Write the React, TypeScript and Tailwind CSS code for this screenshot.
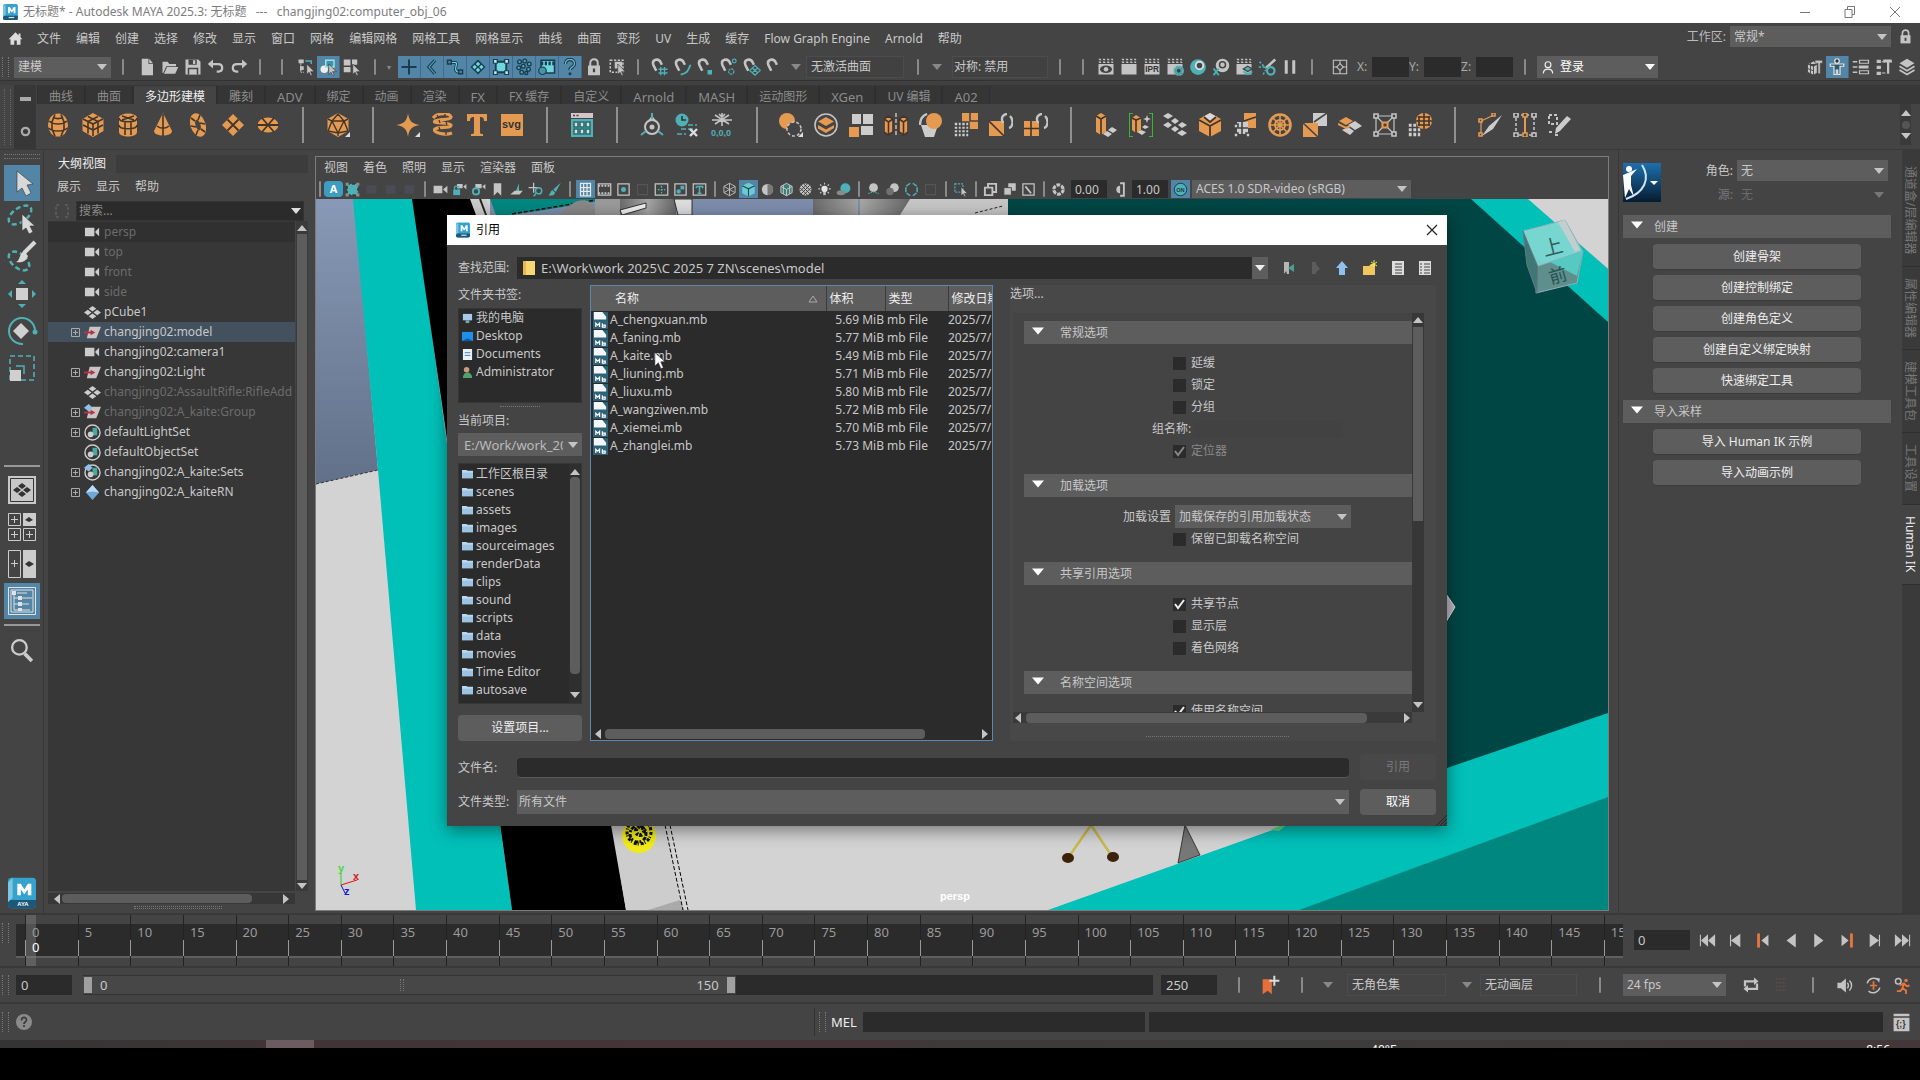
import React, { ReactNode } from "react";

const G = "#c4c4c4";
const O = "#e59a52";
const T = "#4fb0b6";

function Svg({ size = "size-5", children, box = "0 0 24 24" }: { size?: string; children: ReactNode; box?: string }) {
  return (
    <svg viewBox={box} className={`${size} shrink-0`} fill="none" strokeWidth="1.6" aria-hidden="true">
      {children}
    </svg>
  );
}

const cursor = <path d="M13 8v14l3-3 2.4 4.6 2-1-2.3-4.4h5z" fill={G} stroke="#333" strokeWidth=".8" />;
const magnet = <path d="M13 6C10-.5 1 2 3 9l4 8M13 6l1.500 3" stroke={G} strokeWidth="3.400" />;
const clap = <path d="M2 1h3l1 2H3zM7.500 1h3l1 2h-3zM13 1h3l1 2h-3zM18.500 1H21l1 2h-2.500zM2 4.500h3l1 2H3zM7.500 4.500h3l1 2h-3zM13 4.500h3l1 2h-3zM18.500 4.500H21l1 2h-2.500zM2 8h20v14H2z" fill={G} />;

/* 24-unit drawings shared by the tool bars */
const art: Record<string, ReactNode> = {
  home: <path d="M1 13 12 2l5 5V4h3v6l3 3h-3v9h-6v-7h-4v7H4v-9z" fill="#dcdcdc" />,
  file: <><path d="M5 1h9v7h6v15H5z" fill={G} /><path d="M15 1l5 6h-5z" fill={G} /></>,
  open: <><path d="M2 5h7l2 3h9v3H7L3 20H2z" fill={G} /><path d="M8 12h15l-4 9H4z" fill={G} /></>,
  save: <><path d="M2 2h17l3 3v17H2z" fill={G} /><path d="M6 2h11v7H6zM5 13h14v9H5z" fill="#444" /><path d="M12 3h3v5h-3zM7 15h10v7H7z" fill={G} /></>,
  undo: <><path d="M6 8h9c7 0 7 10 0 10h-2" stroke={G} strokeWidth="3" /><path d="M1 8l7-6v12z" fill={G} /></>,
  redo: <><path d="M18 8H9c-7 0-7 10 0 10h2" stroke={G} strokeWidth="3" /><path d="M23 8l-7-6v12z" fill={G} /></>,
  selH: <><path d="M2 2h7v5H2zM4 11h5v5H4z" fill={G} /><path d="M11 4h8v4" stroke={T} strokeWidth="2" /><path d="M5 7v12h4" stroke={G} strokeDasharray="2 1" />{cursor}</>,
  selO: <><circle cx="7" cy="15" r="5" fill="#eee" /><path d="M9 3h11v9H9z" stroke="#9fe0e6" fill="#3d93a8" strokeWidth="2" />{cursor}</>,
  selC: <><path d="M1 2h9v8H1zM12 2h7v7h-7zM1 12h9v7H1z" fill={G} />{cursor}</>,
  plus: <path d="M12 2v20M2 12h20" stroke="#183d50" strokeWidth="2.600" />,
  angle: <><path d="M16 3 8 12l8 9" stroke="#183d50" strokeWidth="4.500" /><path d="M16 3 8 12l8 9" stroke="#5aa9b8" strokeWidth="1.500" /></>,
  curve: <><path d="M2 3h5v5H2zM17 16h5v5h-5z" stroke="#183d50" strokeWidth="2" /><path d="M8 6h5c4 2-5 10 3 13" stroke="#183d50" strokeWidth="4" /><path d="M8 6h5c4 2-5 10 3 13" stroke="#6fd6db" strokeWidth="1.600" /></>,
  diamond: <><path d="m12 2 10 10-10 10L2 12z" fill="#183d50" /><path d="m12 5 3 3-3 3-3-3zM7.500 9l3 3-3 3-3-3zM16.500 9l3 3-3 3-3-3zM12 13l3 3-3 3-3-3z" fill="#6fd6db" /></>,
  lattice: <><path d="M5 5h14v14H5z" fill="#6fd6db" stroke="#183d50" strokeWidth="2.500" /><path d="M2 2h5v5H2zM17 2h5v5h-5zM2 17h5v5H2zM17 17h5v5h-5z" fill="#bfe9ee" stroke="#183d50" /></>,
  dots: <g stroke="#183d50" fill="#5f9fb0" strokeWidth="1.800"><circle cx="6" cy="5" r="2.500" /><circle cx="13" cy="4" r="2.500" /><circle cx="19" cy="8" r="2.500" /><circle cx="11" cy="11" r="2.500" /><circle cx="5" cy="13" r="2.500" /><circle cx="18" cy="15" r="2.500" /><circle cx="9" cy="19" r="2.500" /><circle cx="15" cy="20" r="2" /></g>,
  film: <><path d="M4 3h18v17H4z" fill="#6fd6db" stroke="#183d50" strokeWidth="2" /><path d="M4 7h18" stroke="#183d50" strokeWidth="5" strokeDasharray="3 2" /><circle cx="6" cy="17" r="5" fill="#4a93ab" stroke="#183d50" /></>,
  help: <><path d="M6 8c0-8 12-8 12 0 0 4-6 4-6 8" stroke="#183d50" strokeWidth="4.500" /><path d="M6 8c0-8 12-8 12 0 0 4-6 4-6 8" stroke="#7fc3d0" strokeWidth="1.500" /><circle cx="12" cy="21" r="2" fill="#183d50" /></>,
  lock: <><path d="M4 10h16v13H4z" fill={G} /><path d="M7 11V7c0-7 10-7 10 0v4" stroke={G} strokeWidth="2.600" /><path d="M12 14v5" stroke="#444" strokeWidth="3" /></>,
  selBox: <><path d="M3 3h17v16H3z" stroke={G} strokeDasharray="3 2" strokeWidth="2" /><path d="M9 5h10v9H9z" fill={G} />{cursor}</>,
  magGrid: <>{magnet}<path d="M13 12v11M18 12v11M10 15h12M10 20h12" stroke={T} strokeWidth="1.800" /></>,
  magCurve: <>{magnet}<path d="M9 22c8-1 10-5 13-13" stroke={T} strokeWidth="2.600" /></>,
  magPoint: <>{magnet}<path d="M14 16h6v6h-6z" fill={T} /></>,
  magProj: <>{magnet}<circle cx="15" cy="18" r="3.500" stroke={T} strokeDasharray="3 1" /><circle cx="19" cy="4" r="2.500" stroke={T} /></>,
  magPlane: <>{magnet}<path d="m16 10 7 6.500-7 6.500-7-6.500zM12 13l8 7M20 13l-8 7" stroke={T} /></>,
  mag: magnet,
  clapEye: <>{clap}<ellipse cx="12" cy="15" rx="8" ry="5" fill="#444" /><circle cx="12" cy="15" r="3" fill={G} /></>,
  clap: clap,
  clapIpr: <>{clap}<text x="3" y="19" fontSize="11" fontWeight="700" fontFamily="Liberation Sans, sans-serif" fill="#333">IPR</text></>,
  clapGear: <>{clap}<circle cx="17" cy="17" r="5.500" fill="#444" stroke={T} strokeWidth="3" strokeDasharray="3.500 .8" /><circle cx="17" cy="17" r="3.500" stroke={T} /></>,
  ball: <><circle cx="12" cy="12" r="10.500" fill={T} /><circle cx="14" cy="10" r="5" stroke="#ddd" strokeWidth="2.500" fill="#444" /></>,
  ballX: <><circle cx="14" cy="10" r="9" fill={G} /><circle cx="14" cy="9" r="4" stroke="#444" strokeWidth="2" /><path d="m2 14 7 9M9 14l-7 9" stroke={T} strokeWidth="2.600" /></>,
  clapLayer: <>{clap}<path d="m17 11 6 3.500-6 3.500-6-3.500z" fill={T} stroke="#444" /><path d="m11 18 6 3.500 6-3.500" stroke={T} strokeWidth="2.400" /></>,
  paint: <><path d="M23 2 11 13" stroke={G} strokeWidth="3.500" /><circle cx="17" cy="17" r="5" stroke={T} strokeWidth="3" /><path d="m2 5 9 9M1 12h9M7 22l3-6" stroke={T} strokeWidth="2" strokeDasharray="3 2" /></>,
  pause: <path d="M5 3h4v18H5zM15 3h4v18h-4z" fill={G} />,
  cross: <><path d="M2 2h20v20H2zM12 2v20M2 12h20" stroke={G} /><path d="m12 7 5 5-5 5-5-5z" fill="#444" stroke={G} /></>,
  modelKit: <><path d="m2 8 8-4 5 2v14l-5 3-8-4zM10 10v13M2 8l8 3 5-3M2 14l8 3M6 6v15" fill={G} stroke="#444" strokeWidth="1.2" /><path d="M12 3h10v4h-3v14h-3V7h-4z" fill={G} stroke="#444" strokeWidth=".8" /></>,
  man: <><circle cx="12" cy="4" r="3" stroke="#e8e8e8" fill="#333" /><path d="M3 8h18v3h-5v11h-3v-6h-2v6H8V11H3z" fill="#2d5972" stroke="#e8e8e8" /></>,
  attr: <><path d="M10 3h12v4H10zM10 17h12v4H10z" stroke={G} /><path d="M1 5h6M1 12h6M1 19h6" stroke={G} strokeWidth="1.800" /><path d="M9 10h13v4H9z" fill={G} /></>,
  toolSet: <><path d="M3 3h4v3H3zM3 11h4v3H3zM3 19h4v3H3zM9 5h4M9 20h5" fill={G} stroke={G} /><path d="M11 2h11l1 4h-4v15h-3V6h-5z" fill={G} /></>,
  layers: <><path d="m12 1 10 6-10 6L2 7z" fill={G} /><path d="m2 11 10 6 10-6M2 16l10 6 10-6" stroke={G} strokeWidth="2.400" /></>,
  user: <><circle cx="12" cy="8" r="5" stroke="#eee" strokeWidth="2" /><path d="M4 23c0-10 16-10 16 0" stroke="#eee" strokeWidth="2" /></>,
  /* shelf */
  sphere: <><ellipse cx="12" cy="12" rx="10" ry="11.500" fill={O} /><path d="M9 1.500 6 9v7l3 7M15 1.500 18 9v7l-3 7M3 8c5 4 13 4 18 0M2.500 15c5 4 14 4 19 0M7 4c3 2 7 2 10 0" stroke="#43352a" /></>,
  cube: <><path d="m12 0 10.500 6v12L12 24 1.500 18V6z" fill={O} /><path d="m2 6 10 5 10-5M12 11v12M2 12l10 5 10-5M7 3.500l10 5v12M17 3.500l-10 5v12" stroke="#43352a" /></>,
  cylinder: <><path d="M3 5c0-6 18-6 18 0v14c0 6-18 6-18 0z" fill={O} /><path d="M3 5c0 5 18 5 18 0M3 12c0 5 18 5 18 0M9 9v13M15 9v13M6 3l12 4M18 3 6 7" stroke="#43352a" /></>,
  cone: <><path d="m12 0 9 18c0 6-18 6-18 0z" fill={O} /><path d="M12 1v22M6 13c3 3 9 3 12 0" stroke="#43352a" /></>,
  torus: <><ellipse cx="12" cy="12" rx="7.500" ry="12" fill={O} transform="rotate(-18 12 12)" /><ellipse cx="12" cy="12" rx="2.500" ry="5.500" fill="#444" transform="rotate(-18 12 12)" /><path d="M5 5l4 3M19 19l-4-3M5 13l5 1M19 11l-5-1M14 2l-2 5M10 22l2-5" stroke="#43352a" /></>,
  plane: <><path d="m12 1 11 11-11 11L1 12z" fill={O} /><path d="M6.500 6.500l11 11M17.500 6.500l-11 11" stroke="#43352a" strokeWidth="1.800" /></>,
  disc: <><ellipse cx="12" cy="12" rx="10.500" ry="7.500" fill={O} /><path d="M1 12h22M6 5l12 14M18 5 6 19" stroke="#43352a" strokeWidth="1.800" /></>,
  ico: <><path d="m12 0 10.500 6v12L12 24 1.500 18V6z" fill={O} /><path d="M12 1 6 8h12zM6 8l6 12 6-12M2 6l4 2-4 10 10 2 10-2-4-10 4-2M12 20v3" stroke="#43352a" strokeWidth="1.400" /><path d="m24 19-5 5h5z" fill="#ddd" /></>,
  spark: <><path d="M12 0c1 8 4 11 12 12-8 1-11 4-12 12-1-8-4-11-12-12 8-1 11-4 12-12z" fill={O} /><path d="m24 19-5 5h5z" fill="#ddd" /></>,
  helix: <><path d="M3 5C8-1 20 0 21 4c0 3-12 2-16 4-4 3 15 1 16 4 0 4-12 1-16 4-3 3 9 7 17 4" stroke={O} strokeWidth="3.200" /><path d="m7 2 2 3M15 1v3M9 7l1 3M16 9l1 3M9 14l1 3M16 19v3" stroke="#43352a" strokeWidth="1.200" /></>,
  text: <path d="M2 1h20v7h-3c0-3-1-4-4-4v15c0 2 1 2 3 2v2H6v-2c2 0 3 0 3-2V4C6 4 5 5 5 8H2z" fill={O} />,
  svg: <><path d="M1 1h22v22H1z" fill={O} /><text x="2" y="15" fontSize="11" fontWeight="700" fontFamily="Liberation Sans, sans-serif" fill="#333">svg</text></>,
  gridWin: <><path d="M1 0h22v5H1z" fill="#d5c4c8" /><path d="M1 6h22v18H1z" fill={T} /><path d="M4 9h4v5H4zM10 9h4v5h-4zM16 9h4v5h-4zM4 16h4v5H4zM10 16h4v5h-4zM16 16h4v5h-4z" fill="#ddd" stroke="#2d6b70" /><path d="M3 2.500h2M6.500 2.500h2" stroke="#444" /></>,
  pivot: <><circle cx="12" cy="14" r="7" stroke={G} strokeWidth="2" /><circle cx="12" cy="14" r="2.500" fill={G} /><path d="M12 4 9 8M12 4l3 4" stroke={G} strokeWidth="2" /><path d="M12 0v6M6 18l-5 4M18 18l5 4" stroke={T} strokeWidth="2" /></>,
  clock: <><circle cx="7" cy="7" r="6.500" fill={T} /><path d="M7 3v4h4" stroke="#333" /><path d="M13 12h9M6 16h12M2 21h9" stroke={T} strokeDasharray="5 2" /><path d="m15 16 7 7M22 16l-7 7" stroke="#ddd" strokeWidth="2.400" /></>,
  freeze: <><path d="M12 0v13M5 2l14 9M19 2 5 11M2 7h20M9 1l3 3 3-3" stroke={G} strokeWidth="1.600" /><text x="1" y="23" fontSize="9" fontWeight="700" fontFamily="Liberation Sans, sans-serif" fill={T}>0,0,0</text></>,
  bool: <><circle cx="8" cy="8" r="8" fill={O} /><circle cx="15" cy="16" r="7" fill="#444" stroke={G} strokeDasharray="3 2" /><path d="m24 19-5 5h5z" fill="#ddd" /></>,
  stack: <><circle cx="12" cy="12" r="11" stroke={G} strokeWidth="1.600" /><path d="m12 4 8 4.500-8 4.500-8-4.500z" fill={O} /><path d="m4 12 8 4.500 8-4.500v3L12 20l-8-4.500z" fill={O} /></>,
  combine: <><path d="M0 14h10v10H0z" fill={O} /><path d="M3 1h9v10H3zM14 1h10v10H14zM12 13h12v9H12z" fill="#ccc" /></>,
  mirror: <><path d="m0 6 4-3 5 3v13l-5 3-4-3zM15 6l5-3 4 3v13l-4 3-5-3z" fill={O} stroke="#43352a" /><path d="M4.500 9v13M19.500 9v13M0 6l4.500 3L9 6M15 6l4.500 3L24 6" stroke="#43352a" /><path d="M12 0v24" stroke="#ddd" strokeDasharray="4 2" strokeWidth="1.200" /></>,
  smooth: <><path d="m2 12 4 12h9l4-12z" fill="#ccc" /><circle cx="15" cy="8" r="8" fill={O} /><path d="M8 1C3 3 1 7 1 12" stroke={G} strokeWidth="2.400" /></>,
  gridOr: <><path d="M8 0h16v16H8z" fill={O} /><path d="M0 9h15v15H0z" fill="#ccc" stroke="#444" /><path d="M4 9v15M7.500 9v15M11.500 9v15M0 13h15M0 16.500h15M0 20h15M16 0v8M16 8h8" stroke="#444" /></>,
  swap: <><path d="M0 8h15v15H0z" fill={O} /><path d="m0 8 15 15" stroke="#43352a" /><path d="M14 10c-3-6 1-9 4-9M20 15c4-1 5-8 1-12" stroke={G} strokeWidth="2.400" /></>,
  swap2: <><path d="M0 8h15v15H0z" fill={O} /><path d="M7 8v15M0 15.500h15" stroke="#43352a" /><path d="M14 10c-3-6 1-9 4-9M20 15c4-1 5-8 1-12" stroke={G} strokeWidth="2.400" /></>,
  extrude: <><path d="m2 3 5-3 5 3v16l-5 3-5-3z" fill={O} /><path d="m2 3 5 3 5-3M7 6v16" stroke="#43352a" /><path d="m18 14 5 3-4 3-5-3zM13 18l5 3-4 3-5-3z" fill="#ccc" /></>,
  bridge: <><path d="M4 0H0v24h4M20 0h4v24h-4" stroke="#35d42b" strokeWidth="1.600" /><path d="m3 5 4-3 5 3v12l-5 3-4-3z" fill={O} /><path d="m3 5 4 2 5-2M7 7v13" stroke="#43352a" /><path d="M18 2l1 3 3 1-3 1-1 3-1-3-3-1 3-1zM16 12l4 2-4 2-3-2zM12 17l5 2-4 3-5-3z" fill="#ccc" /></>,
  tiles: <path d="m5 0 5 3-5 3-5-3zM12 5l4 3-4 3-4-3zM19 9l5 3-5 3-4-3zM5 9l4 3-4 3-5-3zM12 13l4 3-4 3-4-3zM19 17l5 3-5 3-5-3z" fill="#ccc" />,
  bevel: <><path d="m12 0 11 6v12l-11 6-11-6V6z" fill={O} /><path d="m5 4 7-4 7 4-7 4z" fill="#d8d8d8" /><path d="m1 7 11 6 11-6M12 13v11M6 4l6 5 6-5" stroke="#43352a" strokeWidth="1.800" /></>,
  detach: <><path d="M11 0h12v15H11z" fill={O} /><path d="M11 8 23 4" stroke="#43352a" /><path d="M4 9h11v12H4z" fill="#ccc" /><path d="M1 20h4v4H1zM13 20h4v4h-4zM1 11h4v4H1zM9 8v13M4 15h11" stroke="#444" fill="#ccc" /></>,
  wheel: <><circle cx="12" cy="12" r="10.500" stroke={O} strokeWidth="2.600" /><circle cx="12" cy="12" r="5" stroke={O} strokeWidth="2" /><path d="M12 2v20M2 12h20M5 5l14 14M19 5 5 19" stroke={O} strokeWidth="1.600" /></>,
  quads: <><path d="M10 0h14v13H10z" fill="#ccc" /><path d="M0 10h15v14H0z" fill={O} /><path d="m0 10 15 14M11 9l13-9" stroke="#444" /></>,
  flat: <><path d="m8 4 7 4-7 4-7-4z" fill={O} /><path d="m17 8 7 5-7 4-7-5zM10 14l6 4-4 4-8-5z" fill="#ccc" /><path d="m0 11 8 4 4-2" stroke={O} strokeWidth="2" /></>,
  uv: <><path d="M3 3h18v18H3zM3 3l18 18M21 3 3 21" stroke={G} strokeWidth="1.200" /><path d="M9.500 9.500h5v5h-5z" fill="#444" stroke={O} strokeWidth="2" /><path d="M1 1h4v4H1zM19 1h4v4h-4zM1 19h4v4H1zM19 19h4v4h-4z" fill="#444" stroke={G} /></>,
  globeGrid: <><path d="M0 10h13v14H0z" fill="#ccc" stroke="#444" /><path d="M4.500 10v14M9 10v14M0 14.500h13M0 19h13" stroke="#444" /><circle cx="16" cy="8" r="8" fill={O} /><path d="M16 0v16M8 8h16M11 3v10M21 3v10M10 4h12M10 12h12" stroke="#43352a" /></>,
  knife: <><path d="M3 8v14M3 8l13-6" stroke={O} strokeWidth="1.200" /><path d="M24 2 11 13 4 23l11-7z" fill="#ccc" /><path d="M1 6h3v3H1zM14 0h3v3h-3zM1 20h3v3H1z" fill="#444" stroke={O} /></>,
  loop: <><path d="M3 2h18v20H3z" stroke={G} strokeDasharray="3 2" /><path d="M12 2v20" stroke={O} strokeWidth="2" /><path d="M10 0h4v4h-4zM10 20h4v4h-4z" fill="#444" stroke={O} /><path d="M1 0h4v4H1zM19 0h4v4h-4zM1 20h4v4H1zM19 20h4v4h-4z" fill="#444" stroke={G} /></>,
  pencil: <><path d="M2 2h8v9H2zM2 19h4M8 22h4" stroke={G} strokeDasharray="3 2" strokeWidth="2" /><path d="M20 3l4 3L13 18l-5 3 1-6z" fill="#ccc" /></>,
  /* viewport bar */
  frame: <><path d="M3 3h18v18H3z" fill={T} stroke="#2f3f40" strokeWidth="3" strokeDasharray="5 3" /><path d="M1 1h5v5H1zM18 1h5v5h-5zM1 18h5v5H1zM18 18h5v5h-5z" fill="#8c8c8c" /></>,
  dim: <path d="M4 5h16v14H4z" fill="#4b4b53" />,
  cam: <path d="M1 6h14v12H1zM16 12l7-6v12z" fill={G} />,
  camLock: <><path d="M8 3h9v7H8zM18 7l5-4v9z" fill={G} /><path d="M2 12h11v9H2z" fill={T} /><path d="M4 12V9c0-3 7-3 7 0v3" stroke={T} strokeWidth="2" /></>,
  camGear: <><path d="M7 3h10v7H7zM18 7l5-4v9z" fill={G} /><circle cx="8" cy="15" r="5" stroke={T} strokeWidth="3" /></>,
  mark: <path d="M6 2h12v20l-6-6-6 6z" fill={G} />,
  plane2: <><path d="M10 17 16 2v13z" fill={T} /><path d="m2 20 7-6h13l-5 6z" fill={G} /></>,
  pan: <><path d="M9 1v16M1 9h16" stroke={G} strokeWidth="2" /><circle cx="17" cy="14" r="5" stroke={T} strokeWidth="2.400" /><path d="m13 18-4 5" stroke={T} strokeWidth="2.400" /></>,
  brush: <path d="M22 1 10 12l4 4zM9 13c-4 1-3 6-7 8 5 2 10 0 11-4z" fill={T} />,
  grid: <path d="M4 2h16v20H4zM9 2v20M14.500 2v20M4 9h16M4 15h16" stroke="#e8e8e8" strokeWidth="2" />,
  strip: <><path d="M2 3h20v18H2z" stroke={G} strokeWidth="2" /><path d="M2 6h20M2 18h20" stroke={G} strokeWidth="3" strokeDasharray="3 2" /></>,
  boxDot: <><path d="M3 3h18v18H3z" stroke={G} strokeWidth="2" /><circle cx="12" cy="12" r="4" fill={T} /></>,
  boxDim: <path d="M4 4h16v16H4z" stroke="#555" strokeWidth="2" />,
  boxDash: <><path d="M2 3h20v18H2z" stroke={G} strokeWidth="2" /><path d="M6 12h12M12 6v12" stroke={T} strokeDasharray="3 2" strokeWidth="2" /></>,
  boxShape: <><path d="M3 3h18v18H3z" stroke={G} strokeWidth="2" /><circle cx="9" cy="15" r="3.500" fill={T} /><path d="M12 6h6v6h-6z" fill={T} /></>,
  boxT: <><path d="M2 3h20v18H2z" stroke={G} strokeWidth="2" /><path d="M7 7h10v3M7 7v3M12 7v11M9 18h6" stroke={T} strokeWidth="2.400" /></>,
  wire: <path d="m12 2 9 5v10l-9 5-9-5V7zM3 7l9 5 9-5M12 12v10M12 2v10M3 17l9-5 9 5" stroke={G} strokeWidth="1.400" />,
  shaded: <><path d="m12 1 10 5v12l-10 5-10-5V6z" fill="#6ccbd2" /><path d="m2 6 10 5 10-5M12 11v12" stroke="#1d4a58" strokeWidth="1.800" /></>,
  half: <><circle cx="12" cy="12" r="9" fill={G} /><path d="M12 3a9 9 0 0 1 0 18z" fill="#777" /></>,
  texCube: <><path d="m12 2 9 5v10l-9 5-9-5V7z" fill="#3b7f78" stroke={G} /><path d="m3 7 9 5 9-5M12 12v10M7 5v14M17 5v14" stroke={G} /></>,
  checker: <><circle cx="12" cy="12" r="9.500" fill={G} /><path d="M5 5l14 14M9 3l12 12M3 9l12 12M19 5 5 19M15 3 3 15M21 9 9 21" stroke="#444" strokeWidth="1.600" /></>,
  bulb: <><circle cx="12" cy="11" r="5" fill="#e5e5e5" /><path d="M10 16h4v5h-4z" fill={G} /><path d="M12 1v3M2 11h3M19 11h3M5 4l2 2M19 4l-2 2M5 18l2-2M19 18l-2-2" stroke={G} strokeWidth="1.800" /></>,
  shadow: <><circle cx="15" cy="10" r="8" fill={T} /><ellipse cx="8" cy="17" rx="7" ry="4" fill="#8a8a8a" /></>,
  ao: <><circle cx="12" cy="9" r="7" fill={G} /><path d="M4 19c5-4 11-4 16 0" stroke={T} strokeDasharray="2 2" strokeWidth="2" /></>,
  blur: <><circle cx="15" cy="9" r="7" fill={G} /><circle cx="8" cy="15" r="6" fill="#707070" /></>,
  alias: <path d="M10 2 3 7v10l7 5M14 2l7 5v10l-7 5" stroke={T} strokeWidth="2.400" strokeDasharray="8 2" />,
  isolate: <><path d="M3 3h13v13H3z" stroke={T} strokeDasharray="3 2" strokeWidth="2" />{cursor}</>,
  xray: <><path d="M8 3h13v13H8z" stroke={G} strokeWidth="3" /><path d="M3 9h12v12H3z" fill="#444" stroke={G} strokeWidth="3" /></>,
  xray2: <><path d="M10 2h12v12H10z" fill={G} /><path d="M3 9h12v12H3z" fill={G} stroke="#444" strokeWidth="1.500" /></>,
  xray3: <><path d="M3 3h18v18H3z" stroke={G} strokeWidth="2" /><path d="m7 7 9 11" stroke={G} strokeWidth="3" /></>,
  aperture: <circle cx="12" cy="12" r="7.500" stroke={G} strokeWidth="5" strokeDasharray="6 1.800" />,
  gamma: <><path d="M13 2h6v20h-6" stroke={G} strokeWidth="3" /><path d="M13 6a6 6 0 0 0 0 12z" fill={G} /></>,
  onBadge: <><circle cx="12" cy="12" r="10" fill={T} stroke="#183d50" /><text x="5" y="16" fontSize="9" fontWeight="700" fontFamily="Liberation Sans, sans-serif" fill="#183d50">ON</text></>,
  /* playback */
  first: <path d="M2 4v16M12 5v14l-8-7zM22 5v14l-8-7z" fill={G} stroke={G} strokeWidth="1.500" />,
  prev: <path d="M5 4v16M18 4v16L7 12z" fill={G} stroke={G} />,
  prevKey: <><path d="M5 2v20" stroke="#e4763e" strokeWidth="4" /><path d="M19 4v16L9 12z" fill={G} /></>,
  back: <path d="M18 2v20L5 12z" fill={G} />,
  play: <path d="M6 2v20l13-10z" fill={G} />,
  nextKey: <><path d="M19 2v20" stroke="#e4763e" strokeWidth="4" /><path d="M5 4v16l10-8z" fill={G} /></>,
  next: <path d="M19 4v16M6 4v16l11-8z" fill={G} stroke={G} />,
  last: <path d="M22 4v16M12 5v14l8-7zM2 5v14l8-7z" fill={G} stroke={G} strokeWidth="1.500" />,
  keyMark: <><path d="M2 5h11v18l-5-4-6 4z" fill="#e4703c" /><path d="M16 1v12M10 7h12" stroke="#ddd" strokeWidth="2.400" /></>,
  repeat: <><path d="M4 14V7h14M20 10v7H6" stroke={G} strokeWidth="3" /><path d="m16 2 6 5-6 5zM8 12l-6 5 6 5z" fill={G} /></>,
  cache: <path d="M5 4h14M5 9h14M5 14h14M5 19h14" stroke="#5a4a44" strokeWidth="2" strokeDasharray="3 1" />,
  sound: <><path d="M2 8h5l7-6v20l-7-6H2z" fill={G} /><path d="M16 8c2 2 2 6 0 8M19 5c4 4 4 10 0 14" stroke={G} strokeWidth="2" /></>,
  autoKey: <><path d="M19 4A10 10 0 0 0 3 9M5 20a10 10 0 0 0 16-5" stroke={G} strokeWidth="2" /><path d="m15 1 6 1-1 6z" fill={G} /><path d="M12 6v12M7 12h10" stroke="#e4763e" strokeWidth="2.400" /></>,
  runner: <><circle cx="6" cy="6" r="4" stroke={G} strokeWidth="2" /><circle cx="17" cy="5" r="2.500" fill="#e4763e" /><path d="M8 12l6-3 4 4 4-1M14 9l-2 7 5 3v5M12 16l-3 4H4" stroke="#e4763e" strokeWidth="2.600" /></>,
  script: <><path d="M2 1h20v3H2zM2 6h20v17H2z" fill={G} /><text x="5" y="18" fontSize="11" fontWeight="700" fontFamily="Liberation Sans, sans-serif" fill="#333">{"{;}"}</text></>,
};

function Ico({ n, size }: { n: string; size?: string }) {
  return <Svg size={size}>{art[n]}</Svg>;
}

function Tri({ dir = "down", color = G, big }: { dir?: string; color?: string; big?: boolean }) {
  const d = dir === "down" ? "M0 2h10l-5 6z" : dir === "up" ? "M0 8h10L5 2z" : dir === "left" ? "M8 0v10L2 5z" : "M2 0v10l6-5z";
  return <svg viewBox="0 0 10 10" className={big ? "size-3 shrink-0" : "size-[10px] shrink-0"} aria-hidden="true"><path d={d} fill={color} /></svg>;
}

function Logo({ size, caption }: { size: string; caption?: boolean }) {
  return (
    <svg viewBox="0 0 24 26" className={`${size} shrink-0`} aria-hidden="true">
      <path d="M3 0h18q3 0 3 3v20q0 3-3 3H3q-3 0-3-3V3q0-3 3-3z" fill="#36a3cf" />
      <path d="M0 19h24v4q0 3-3 3H3q-3 0-3-3z" fill="#1d5878" />
      <path d="M0 4l4-4v17l-4 4z" fill="#7cc6df" />
      <path d="M8 15V5h3l3 5 3-5h3v10h-3v-5l-3 4-3-4v5z" fill="#fff" />
      {caption ? <text x="8" y="24" fontSize="5" fontWeight="700" fontFamily="Liberation Sans, sans-serif" fill="#fff">AYA</text> : <path d="M9 22h9" stroke="#cfe6ef" strokeWidth="2" />}
    </svg>
  );
}

function Sep({ w = "w-6" }: { w?: string }) {
  return <span className={`${w} flex shrink-0 justify-center`}><span className="h-4 w-[2px] rounded-full bg-[#8a8a8a]" /></span>;
}

function Tool({ n, on, label }: { n: string; on?: boolean; label?: string }) {
  return (
    <button aria-label={label ?? n} className={`flex h-[22px] w-[23px] shrink-0 items-center justify-center ${on ? "border-r border-[#3f6c88] bg-[#5285a6]" : ""}`}>
      <Ico n={n} size="size-[18px]" />
    </button>
  );
}

function Mini({ n, on }: { n: string; on?: boolean }) {
  return (
    <button aria-label={n} className={`flex h-[18px] w-[19px] shrink-0 items-center justify-center ${on ? "bg-[#5285a6]" : ""}`}>
      <Ico n={n} size="size-[15px]" />
    </button>
  );
}

function Pick({ value, label, className = "", arrow = G }: { value: string; label: string; className?: string; arrow?: string }) {
  return (
    <div className={`relative flex shrink-0 items-center bg-[#5d5d5d] ${className}`}>
      <select aria-label={label} className="h-full w-full appearance-none truncate bg-transparent pr-5 pl-1 outline-none">
        <option>{value}</option>
      </select>
      <span className="pointer-events-none absolute right-1"><Tri color={arrow} /></span>
    </div>
  );
}

function Grip() {
  return <span className="h-5 w-[7px] shrink-0 border-x border-dotted border-[#777]" />;
}

const menus = ["文件", "编辑", "创建", "选择", "修改", "显示", "窗口", "网格", "编辑网格", "网格工具", "网格显示", "曲线", "曲面", "变形", "UV", "生成", "缓存", "Flow Graph Engine", "Arnold", "帮助"];
const shelfTabs = ["曲线", "曲面", "多边形建模", "雕刻", "ADV", "绑定", "动画", "渲染", "FX", "FX 缓存", "自定义", "Arnold", "MASH", "运动图形", "XGen", "UV 编辑", "A02"];
const shelf = "sphere cube cylinder cone torus plane disc | ico | spark helix text svg | gridWin | pivot clock freeze | bool stack combine mirror smooth gridOr swap swap2 | extrude bridge tiles bevel detach wheel quads flat uv globeGrid | knife loop pencil".split(" ");

function Header() {
  return (
    <header className="shrink-0">
      <div className="flex h-[23px] items-center bg-white text-[#7d7d7d]">
        <span className="ml-[3px]"><Logo size="h-4 w-[15px]" /></span>
        <h1 className="ml-[5px] whitespace-pre">无标题* - Autodesk MAYA 2025.3: 无标题   ---   changjing02:computer_obj_06</h1>
        <div className="ml-auto flex">
          <button aria-label="最小化" className="flex w-[45px] justify-center"><svg viewBox="0 0 12 12" className="size-3"><path d="M1 6.500h10" stroke="#777" /></svg></button>
          <button aria-label="还原" className="flex w-[45px] justify-center"><svg viewBox="0 0 12 12" className="size-3"><path d="M1 3.500h7v8H1zM3.500 3V.5h7v8H8" fill="none" stroke="#777" /></svg></button>
          <button aria-label="关闭" className="mr-[3px] flex w-[45px] justify-center"><svg viewBox="0 0 12 12" className="size-3"><path d="m1 1 10 10M11 1 1 11" stroke="#777" /></svg></button>
        </div>
      </div>

      <div className="flex h-[31px] items-center">
        <button aria-label="主页" className="ml-[8px] mr-[14px]"><Ico n="home" size="size-[15px]" /></button>
        <nav className="flex gap-[15px]">
          {menus.map((m) => <button key={m} className="whitespace-nowrap">{m}</button>)}
        </nav>
        <span className="mr-1 mb-1 ml-auto text-[#bbb]">工作区:</span>
        <Pick value="常规*" label="工作区" className="mb-1 h-[21px] w-[161px]" />
        <span className="mx-[7px] mb-1"><Ico n="lock" size="size-[15px]" /></span>
      </div>

      <div className="flex h-[26px] items-center">
        <span className="mr-[5px] ml-[2px] flex"><Grip /></span>
        <Pick value="建模" label="菜单集" className="h-[21px] w-[97px]" />
        <Sep />
        <Tool n="file" /><Tool n="open" /><Tool n="save" /><Tool n="undo" /><Tool n="redo" />
        <Sep w="w-5" /><Sep />
        <Tool n="selH" /><Tool n="selO" on /><Tool n="selC" />
        <Sep />
        <span className="w-[11px] text-[8px] text-[#888]">▾</span>
        <Tool n="plus" on /><Tool n="angle" on /><Tool n="curve" on /><Tool n="diamond" on /><Tool n="lattice" on /><Tool n="dots" on /><Tool n="film" on /><Tool n="help" on />
        <Tool n="lock" /><Tool n="selBox" />
        <Sep w="w-5" />
        <Tool n="magGrid" /><Tool n="magCurve" /><Tool n="magPoint" /><Tool n="magProj" /><Tool n="magPlane" /><Tool n="mag" />
        <span className="flex w-5 justify-center"><Tri color="#888" /></span>
        <span className="flex h-[22px] w-[98px] shrink-0 items-center border border-[#4c4c4c] bg-[#414141] pl-1">无激活曲面</span>
        <Sep w="w-7" />
        <span className="flex w-5"><Tri color="#888" /></span>
        <span className="flex h-[22px] w-24 shrink-0 items-center border border-[#4c4c4c] bg-[#414141] pl-px">对称: 禁用</span>
        <Sep /><Sep w="w-[22px]" />
        <Tool n="clapEye" /><Tool n="clap" /><Tool n="clapIpr" /><Tool n="clapGear" /><Tool n="ball" /><Tool n="ballX" /><Tool n="clapLayer" /><Tool n="paint" /><Tool n="pause" />
        <Sep w="w-[22px]" />
        <span className="flex w-[34px] justify-center"><Ico n="cross" size="size-4" /></span>
        {["X", "Y", "Z"].map((a) => (
          <label key={a} className="flex items-center"><span className="w-[15px] text-[#aaa]">{a}:</span><input className="h-5 w-[37px] bg-[#2b2b2b]" /></label>
        ))}
        <Sep />
        <div className="relative flex h-[22px] w-[121px] shrink-0 items-center bg-[#5d5d5d] text-white">
          <span className="pointer-events-none absolute left-1"><Ico n="user" size="size-[14px]" /></span>
          <select aria-label="登录" className="h-full w-full appearance-none pl-[23px] outline-none"><option>登录</option></select>
          <span className="pointer-events-none absolute right-[3px]"><Tri color="#fff" /></span>
        </div>
        <div className="ml-auto mr-[2px] flex">
          <Tool n="modelKit" /><Tool n="man" on /><Tool n="attr" /><Tool n="toolSet" /><Tool n="layers" />
        </div>
      </div>

      <div className="h-[5px] border-t border-[#333] bg-[#404040]" />

      <div className="flex h-[64px]">
        <div className="flex w-[14px] shrink-0 justify-center py-1"><span className="w-[7px] border-x border-dotted border-[#666]" /></div>
        <div className="mr-px flex w-[22px] shrink-0 flex-col items-center justify-between bg-[#373737] pt-3 pb-3">
          <span className="h-1 w-[11px] bg-[#aaa]" />
          <svg viewBox="0 0 12 12" className="size-[11px]"><circle cx="6" cy="6" r="4" fill="none" stroke="#aaa" strokeWidth="2.500" /></svg>
        </div>
        <div className="min-w-0 flex-1">
          <div className="flex h-[19px] bg-[#373737] pt-px text-[#8c8c8c]">
            {shelfTabs.map((t) => (
              <button key={t} className={`flex items-center border-x border-[#2f2f2f] px-[11px] pt-[3px] whitespace-nowrap ${t === "多边形建模" ? "bg-[#444] text-[#eee]" : "bg-[#353535]"} ${/^\w+$/.test(t) ? "text-[13px]" : ""}`}>{t}</button>
            ))}
          </div>
          <div className="flex h-[45px] pb-1">
            <div className="ml-1 flex w-[80vw] items-center">
              {shelf.map((n, i) => (
                <span key={i} className="flex flex-1 justify-center">
                  {n === "|" ? <span className="h-9 w-[2px] bg-[#909090]" /> : <button aria-label={n}><Ico n={n} size="size-6" /></button>}
                </span>
              ))}
            </div>
            <div className="mr-[9px] ml-auto flex w-[11px] flex-col items-center justify-between bg-[#3a3a3a] py-1">
              <Tri dir="up" /><span className="size-[8px] rounded-full bg-[#555]" /><Tri />
            </div>
          </div>
        </div>
      </div>
    </header>
  );
}

function ToolBox() {
  const cell = "flex h-9 w-9 items-center justify-center";
  return (
    <aside className="flex w-[43px] shrink-0 flex-col items-center pb-[4px]">
      <span className="mt-1 h-[5px] w-9 shrink-0 border-y border-dotted border-[#777]" />
      <div className="mt-[6px] flex flex-col gap-px">
        <button aria-label="选择" className={`${cell} bg-[#5285a6]`}><svg viewBox="0 0 36 36" className="size-9"><path d="M13 6v21l5-4 4 8 5-3-4-8 6-1z" fill="#d8d8d8" stroke="#333" strokeWidth=".6" /></svg></button>
        <button aria-label="套索" className={cell}><svg viewBox="0 0 36 36" className="size-9"><ellipse cx="16" cy="13" rx="13" ry="7" transform="rotate(-35 16 13)" fill="none" stroke={T} strokeWidth="2.500" strokeDasharray="5 3" /><path d="M18 12v17l4-3 3 6 4-2-3-6h5z" fill="#d8d8d8" stroke="#333" strokeWidth=".6" /></svg></button>
        <button aria-label="绘制选择" className={cell}><svg viewBox="0 0 36 36" className="size-9"><ellipse cx="15" cy="22" rx="7" ry="12" transform="rotate(-50 15 22)" fill="none" stroke={T} strokeWidth="2.500" strokeDasharray="5 3" /><path d="M31 3 20 14" stroke="#d8d8d8" strokeWidth="4" /><path d="M20 12l4 5c-2 6-7 7-12 6 4-1 3-8 8-11z" fill="#d8d8d8" /></svg></button>
        <button aria-label="移动" className={cell}><svg viewBox="0 0 36 36" className="size-9"><path d="M12 12h12v12H12z" fill="#d0d0d0" /><path d="m18 4 4 4h-8zM18 32l4-4h-8zM4 18l4-4v8zM32 18l-4-4v8z" fill={T} /></svg></button>
        <button aria-label="旋转" className={cell}><svg viewBox="0 0 36 36" className="size-9"><path d="M19 31A13 13 0 1 1 31 18" fill="none" stroke={T} strokeWidth="2" /><circle cx="31" cy="19" r="2.500" fill={T} /><path d="m17 10 8 8-8 8-8-8z" fill="#d0d0d0" /></svg></button>
        <button aria-label="缩放" className={cell}><svg viewBox="0 0 36 36" className="size-9"><path d="M6 6h24v24H6z" fill="none" stroke={T} strokeWidth="1.600" strokeDasharray="5 3" /><path d="M6 20h11v11H6z" fill="#d0d0d0" /><path d="M12 16h8v8" fill="none" stroke={T} strokeWidth="1.500" /></svg></button>
      </div>
      <span className="mt-[79px] h-[2px] w-9 bg-[#999]" />
      <div className="mt-[5px] flex flex-col gap-px">
        <button aria-label="单视图" className={cell}><svg viewBox="0 0 28 28" className="size-7"><path d="M0 0h28v28H0z" fill="#c8c8c8" /><path d="M2.500 2.500h23v23h-23z" fill="none" stroke="#333" /><path d="m14 7 4 3-4 3-4-3zM9 11l4 3-4 3-4-3zM19 11l4 3-4 3-4-3zM14 15l4 3-4 3-4-3z" fill="#333" /></svg></button>
        <button aria-label="四视图" className={cell}><svg viewBox="0 0 28 28" className="size-7"><path d="M.5.5h12v12H.5zM.5 15.500h12v12H.5zM15.500 15.500h12v12h-12zM6.500 3v7M3 6.500h7M6.500 18v7M3 21.500h7M21.500 18v7M18 21.500h7" fill="none" stroke="#ccc" /><path d="M15 0h13v13H15z" fill="#ccc" /><path d="m21 4 4 3-4 2-4-2z" fill="#333" /></svg></button>
        <button aria-label="双视图" className={cell}><svg viewBox="0 0 28 28" className="size-7"><path d="M.5.5h12v27H.5zM6.500 10v7M3 13.500h7" fill="none" stroke="#ccc" /><path d="M15 0h13v28H15z" fill="#ccc" /><path d="m21 11 5 3-5 3-4-3z" fill="#333" /></svg></button>
        <button aria-label="大纲视图布局" className={`${cell} bg-[#5285a6]`}><svg viewBox="0 0 28 28" className="size-7"><path d="M.5.5h27v27H.5zM3 3h22v22H3zM6 8v15M9 6h10M13 11h11M13 17h8M13 23h9M6 11h6M6 17h6M6 23h6" fill="none" stroke="#e2e2e2" /><path d="M4 4h4v4H4zM10 9h4v4h-4zM10 15h4v4h-4zM10 21h4v3h-4z" fill="#e2e2e2" /></svg></button>
      </div>
      <span className="mt-[5px] h-[2px] w-9 bg-[#999]" />
      <button aria-label="搜索" className="mt-3"><svg viewBox="0 0 24 24" className="size-[25px]"><circle cx="10" cy="9" r="7" fill="none" stroke="#ccc" strokeWidth="2.200" /><path d="m15 15 7 7" stroke="#ccc" strokeWidth="3.400" /></svg></button>
      <span className="mt-auto flex"><Logo size="h-8 w-7" caption /></span>
    </aside>
  );
}

type Node = { t: string; k: string; ex?: boolean; dim?: boolean; sel?: boolean; cur?: boolean };
const nodes: Node[] = [
  { t: "persp", k: "cam", dim: true, cur: true },
  { t: "top", k: "cam", dim: true },
  { t: "front", k: "cam", dim: true },
  { t: "side", k: "cam", dim: true },
  { t: "pCube1", k: "mesh" },
  { t: "changjing02:model", k: "grp", ex: true, sel: true },
  { t: "changjing02:camera1", k: "cam" },
  { t: "changjing02:Light", k: "grp", ex: true },
  { t: "changjing02:AssaultRifle:RifleAdd", k: "mesh", dim: true },
  { t: "changjing02:A_kaite:Group", k: "rgrp", ex: true, dim: true },
  { t: "defaultLightSet", k: "set", ex: true },
  { t: "defaultObjectSet", k: "set" },
  { t: "changjing02:A_kaite:Sets", k: "rset", ex: true },
  { t: "changjing02:A_kaiteRN", k: "ref", ex: true },
];

function NodeIcon({ k }: { k: string }) {
  const gem = <path d="m5 0 4 4-4 4-5-4z" fill="#8fc0e8" />;
  return (
    <svg viewBox="0 0 18 18" className="size-[17px] shrink-0" aria-hidden="true">
      {k === "cam" && <path d="M1 4h10v9H1zM12 8l4-4v9l-4-4z" fill="#ccc" />}
      {k === "mesh" && <path d="m9 2 4 3-4 3-4-3zM4 6l4 3-4 3-4-3zM14 6l4 3-4 3-4-3zM9 10l4 3-4 3-4-3z" fill="#ccc" />}
      {(k === "grp" || k === "rgrp") && <><path d="M6 3h12l-5 12H3z" fill="#cbc4c4" /><path d="M0 8h7V6l5 3-5 3v-2H0z" fill="#b5334a" /></>}
      {(k === "set" || k === "rset") && <><circle cx="9" cy="9" r="8" fill="none" stroke="#ccc" strokeWidth="1.500" /><path d="M9 4h5v8H9z" fill="#4aa8a0" /><circle cx="7" cy="11" r="3" fill="#ccc" /></>}
      {(k === "rgrp" || k === "rset") && gem}
      {k === "ref" && <><path d="m9 1 7 8-7 8-7-8z" fill="#6ea7d8" /><path d="m9 1 7 8-7-1-7 1z" fill="#b9dcf5" /></>}
    </svg>
  );
}

function Outliner() {
  return (
    <section className="flex w-[265px] shrink-0 flex-col border-l border-[#383838] pl-1" aria-label="大纲视图">
      <div className="mt-[5px] flex h-[18px] shrink-0 bg-[#3c3c3c]"><button className="bg-[#444] px-[10px] text-[#eee]">大纲视图</button></div>
      <nav className="flex h-[27px] shrink-0 items-center gap-[15px] pl-[9px]"><button>展示</button><button>显示</button><button>帮助</button></nav>
      <div className="flex h-[21px] shrink-0 items-center">
        <svg viewBox="0 0 14 14" className="mx-[7px] size-[14px]"><path d="M4 1H1v12h3M10 1h3v12h-3" fill="none" stroke="#6a6a6a" strokeDasharray="3 2" /></svg>
        <div className="relative mr-1 flex h-5 flex-1 items-center border border-[#333] bg-[#2b2b2b]">
          <input aria-label="搜索" placeholder="搜索..." className="w-full bg-transparent pl-[2px] outline-none placeholder:text-[#8a8a8a]" />
          <span className="absolute right-[2px]"><Tri color="#ddd" /></span>
        </div>
      </div>
      <div className="flex min-h-0 flex-1">
        <ul className="min-w-0 flex-1 overflow-hidden bg-[#373737] pt-px">
          {nodes.map((n) => (
            <li key={n.t} className={`flex h-5 items-center whitespace-nowrap ${n.sel ? "bg-[#43505e]" : n.cur ? "bg-[#303030]" : ""} ${n.dim ? "text-[#6c6c6c]" : ""}`}>
              <span className="ml-[23px] flex w-[13px] shrink-0">
                {n.ex && <svg viewBox="0 0 9 9" className="size-[9px]"><path d="M.5.5h8v8h-8zM4.500 2v5M2 4.500h5" fill="none" stroke="#aaa" /></svg>}
              </span>
              <NodeIcon k={n.k} />
              <span className="ml-[3px]">{n.t}</span>
            </li>
          ))}
        </ul>
        <div className="ml-px flex w-3 flex-col items-center bg-[#3a3a3a] pt-[2px]">
          <Tri dir="up" /><span className="my-px w-[10px] flex-1 bg-[#5d5d5d]" /><Tri />
        </div>
      </div>
      <div className="mt-[2px] mr-[13px] flex h-[11px] shrink-0 items-center bg-[#373737] px-1"><Tri dir="left" /><span className="h-[9px] w-[190px] rounded bg-[#5d5d5d]" /><span className="ml-auto flex"><Tri dir="right" /></span></div>
      <span className="mx-auto mt-[2px] mb-1 h-[3px] w-[88px] shrink-0 border-y border-dotted border-[#777]" />
    </section>
  );
}

function Scene() {
  return (
    <svg viewBox="316 199 1292 711" preserveAspectRatio="none" className="absolute inset-0 size-full" aria-label="persp 视图">
      <defs>
        <linearGradient id="sky" x1="0" y1="0" x2="0" y2="1"><stop offset="0" stopColor="#8799b6" /><stop offset="1" stopColor="#627189" /></linearGradient>
        <linearGradient id="tube" x1="0" y1="0" x2="1" y2="0"><stop offset="0" stopColor="#6b6b6b" /><stop offset=".5" stopColor="#a5a5a5" /><stop offset="1" stopColor="#666" /></linearGradient>
      </defs>
      <path d="M316 199h1292v711H316z" fill="#d3d3d3" />
      <path d="M316 199h38l24 271-62 14z" fill="url(#sky)" />
      <path d="m316 484 62-14" stroke="#333" strokeDasharray="3 2" />
      <path d="M353 199h60l99 711h-96l-38-440z" fill="#00c0b8" />
      <path d="M412 199h60l60 180 80 446 14 85H512l-67-485z" fill="#000" />
      <path d="M470 199h16l6 16h-16z" fill="#ccc" /><path d="M480 199l6 16" stroke="#222" strokeWidth="2" />
      <path d="M490 199h520v16H490z" fill="#7d8dac" />
      <path d="M490 199h122l-74 12-30 4h-12z" fill="#008880" />
      <path d="m512 214 96-16" stroke="#111" strokeDasharray="4 2" strokeWidth="1.500" />
      <path d="M560 215c10-12 20-18 30-13l10 13z" fill="#888" />
      <path d="M595 199h28v16h-28zM665 199h9v16h-9z" fill="#9a9a9a" />
      <path d="M620 199h56v16h-56z" fill="url(#tube)" />
      <path d="m620 210 26-7v5l-24 7z" fill="#eee" stroke="#111" strokeWidth=".8" />
      <path d="M674 199h18v16h-14z" fill="#ddd" stroke="#111" strokeWidth=".8" />
      <path d="M813 199h45v16h-45zM860 199h50v16h-50z" fill="url(#tube)" />
      <path d="M900 215l10-16h98v16z" fill="#c6c6c6" /><path d="m975 213 28-7" stroke="#222" strokeDasharray="3 2" />
      <path d="M1008 199h600v520l-161 60H1008z" fill="#004644" />
      <path d="M1471 199h58l79 70v53z" fill="#00c0b8" />
      <path d="M1528 199h80v70z" fill="#d3d3d3" />
      <path d="m1447 768 161-55v197h-560z" fill="#00c0b8" />
      <path d="M1608 797v113h-309z" fill="#008880" />
      <path d="M1446 594l9 13-9 15z" fill="#b9b3bd" stroke="#ddd" />
      <g strokeLinejoin="round">
        <path d="m1523 231 42-11 18 32-45 18z" fill="#7fd8d2" stroke="#9ab" opacity=".95" />
        <path d="m1538 266 45-15-6 32-41 10z" fill="#5f8f8d" stroke="#9ab" />
        <path d="m1550 262 33-11-6 25z" fill="#55c9c2" />
        <path d="m1523 231 15 36-1 26-10-28z" fill="#3f7775" stroke="#678" />
        <path d="m1558 222 7-2 15 30-5 2z" fill="#c3cfce" />
      </g>
      <text x="1543" y="254" fontSize="20" transform="rotate(-14 1553 248)" fontFamily="Noto Sans CJK SC, sans-serif" fill="#335f5e">上</text>
      <text x="1549" y="282" fontSize="18" transform="rotate(-16 1558 276)" fontFamily="Noto Sans CJK SC, sans-serif" fill="#285352">前</text>
      <path d="m611 825 15 85h55l-13-85z" fill="#cdcdcd" /><path d="m648 910 32-10 4 10z" fill="#aaa" />
      <path d="m665 825 18 85M670 825l18 85" stroke="#000" strokeDasharray="4 2" />
      <circle cx="639" cy="836" r="17" fill="#f0ea1c" />
      <circle cx="639" cy="832" r="12" fill="none" stroke="#111" strokeWidth="3" strokeDasharray="3 2 1 1" /><circle cx="638" cy="834" r="8" fill="none" stroke="#111" strokeWidth="3" strokeDasharray="2 1 4 2" /><circle cx="640" cy="831" r="4" fill="none" stroke="#111" strokeWidth="4" strokeDasharray="2 2 3 1" />
      <path d="m1091 825-23 33M1091 825l22 33" stroke="#c8b94e" strokeWidth="2.500" fill="none" />
      <ellipse cx="1068" cy="858" rx="6" ry="5" fill="#3b2209" /><ellipse cx="1113" cy="857" rx="6" ry="5" fill="#3b2209" />
      <path d="m1185 825 15 30-22 8z" fill="#777" stroke="#222" strokeWidth=".8" />
      <path d="M1270 830l12-5h5l-8 6z" fill="#5fdc8d" />
      <path d="m341 885 16-5" stroke="#e01010" /><path d="M341 885v-12" stroke="#2ec82e" /><path d="m341 885 4 8" stroke="#1010d0" />
      <g fontSize="11" fontWeight="700" fontFamily="Liberation Sans, sans-serif">
        <text x="338" y="872" fill="#3ddc3d">y</text><text x="353" y="880" fill="#e01818">x</text><text x="344" y="895" fill="#1515dd">z</text>
      </g>
      <text x="940" y="900" fontSize="11" fontWeight="700" fontFamily="Liberation Sans, sans-serif" fill="#fff">persp</text>
    </svg>
  );
}

function Viewport() {
  return (
    <section className="mt-[6px] mb-[2px] ml-[7px] flex min-w-0 flex-1 flex-col border border-[#7c7c7c]" aria-label="视口">
      <nav className="flex h-[22px] shrink-0 items-center gap-[15px] pl-2">
        {["视图", "着色", "照明", "显示", "渲染器", "面板"].map((m) => <button key={m}>{m}</button>)}
      </nav>
      <div className="flex h-5 shrink-0 items-center">
        <Sep w="w-2" />
        <button aria-label="A" className="flex h-4 w-[19px] items-center justify-center rounded-sm bg-[#3d9cc0] text-[11px] font-bold text-white">A</button>
        <Mini n="frame" /><Mini n="dim" /><Mini n="dim" /><Mini n="dim" />
        <Sep w="w-[12px]" />
        <Mini n="cam" /><Mini n="camLock" /><Mini n="camGear" /><Mini n="mark" /><Mini n="plane2" /><Mini n="pan" /><Mini n="brush" />
        <Sep w="w-[12px]" />
        <Mini n="grid" on /><Mini n="strip" /><Mini n="boxDot" /><Mini n="boxDim" /><Mini n="boxDash" /><Mini n="boxShape" /><Mini n="boxT" />
        <Sep w="w-[11px]" />
        <Mini n="wire" /><Mini n="shaded" on /><Mini n="half" /><Mini n="texCube" /><Mini n="checker" /><Mini n="bulb" /><Mini n="shadow" />
        <Sep w="w-[11px]" />
        <Mini n="ao" /><Mini n="blur" /><Mini n="alias" /><Mini n="boxDim" />
        <Sep w="w-[11px]" />
        <Mini n="isolate" />
        <Sep w="w-[11px]" />
        <Mini n="xray" /><Mini n="xray2" /><Mini n="xray3" />
        <Sep w="w-[11px]" />
        <Mini n="aperture" />
        <input aria-label="曝光" defaultValue="0.00" className="mx-[3px] h-[18px] w-9 bg-[#2b2b2b] pl-1" />
        <Mini n="gamma" />
        <input aria-label="伽马" defaultValue="1.00" className="mx-[3px] h-[18px] w-9 bg-[#2b2b2b] pl-1" />
        <Mini n="onBadge" on />
        <Pick value="ACES 1.0 SDR-video (sRGB)" label="视图变换" className="ml-[2px] h-[18px] w-[219px]" />
      </div>
      <div className="relative flex-1"><Scene /></div>
    </section>
  );
}

function SectionHead({ t, pad }: { t: string; pad: string }) {
  return (
    <h2 className="flex h-[23px] shrink-0 items-center bg-[#5d5d5d]">
      <button className="flex items-center"><span className={`mb-1 ml-2 flex ${pad}`}><Tri color="#fff" big /></span>{t}</button>
    </h2>
  );
}

function HumanIK() {
  const btn = "mx-[30px] h-[26px] rounded-sm bg-[#5d5d5d] text-[#eee] border-b border-[#3a3a3a]";
  return (
    <section className="ml-[9px] flex w-[277px] shrink-0 flex-col border-l border-[#383838] px-1 pt-[10px]" aria-label="Human IK">
      <div className="flex h-[45px] items-start">
        <svg viewBox="0 0 38 39" className="mt-[3px] h-[39px] w-[38px] shrink-0" aria-label="角色控制">
          <defs><linearGradient id="hik" x1="0" y1="0" x2="0" y2="1"><stop offset="0" stopColor="#1e6fae" /><stop offset="1" stopColor="#061c30" /></linearGradient></defs>
          <path d="M0 0h38v39H0z" fill="url(#hik)" />
          <circle cx="6" cy="6" r="3" fill="#fff" /><path d="m0 12 14-6-6 7v9l3 12-5-8-4 9z" fill="#fff" />
          <path d="M19 2c9 14 2 28-16 34" fill="none" stroke="#cfe6f7" strokeWidth="2" /><path d="M27 18h8l-4 4z" fill="#fff" />
        </svg>
        <div className="ml-auto grid grid-cols-[auto_151px] items-center gap-x-1 gap-y-[3px] pr-[3px] text-right">
          <span>角色:</span><Pick value="无" label="角色" className="h-[21px]" />
          <span className="text-[#777]">源:</span>
          <div className="relative flex h-[21px] items-center text-[#6a6a6a]"><select disabled aria-label="源" className="w-full appearance-none pl-1"><option>无</option></select><span className="absolute right-1"><Tri color="#777" /></span></div>
        </div>
      </div>
      <div className="mt-[10px] flex flex-col">
        <SectionHead t="创建" pad="mr-[11px]" />
        <div className="flex flex-col gap-[5px] py-[6px]">
          {["创建骨架", "创建控制绑定", "创建角色定义", "创建自定义绑定映射", "快速绑定工具"].map((b) => <button key={b} className={btn}>{b}</button>)}
        </div>
        <SectionHead t="导入采样" pad="mr-[11px]" />
        <div className="flex flex-col gap-[5px] py-[6px]">
          <button className={btn}>导入 Human IK 示例</button>
          <button className={btn}>导入动画示例</button>
        </div>
      </div>
    </section>
  );
}

function SideTabs() {
  const tabs: [string, string][] = [["通道盒/层编辑器", "h-[113px]"], ["属性编辑器", "h-[83px]"], ["建模工具包", "h-[83px]"], ["工具设置", "h-[72px]"], ["Human IK", "h-[80px]"]];
  return (
    <nav className="ml-[7px] flex w-[18px] shrink-0 flex-col bg-[#3a3a3a] pt-[4px]">
      {tabs.map(([t, h]) => (
        <button key={t} className={`${h} flex items-center justify-center border-b border-[#2f2f2f] pr-[2px] leading-4 whitespace-nowrap [text-orientation:sideways] [writing-mode:vertical-rl] ${t === "Human IK" ? "bg-[#444] text-[#eee]" : "text-[#777]"}`}>{t}</button>
      ))}
    </nav>
  );
}

const files = [["A_chengxuan.mb", "5.69"], ["A_faning.mb", "5.77"], ["A_kaite.mb", "5.49"], ["A_liuning.mb", "5.71"], ["A_liuxu.mb", "5.80"], ["A_wangziwen.mb", "5.72"], ["A_xiemei.mb", "5.70"], ["A_zhanglei.mb", "5.73"]];
const folders = ["工作区根目录", "scenes", "assets", "images", "sourceimages", "renderData", "clips", "sound", "scripts", "data", "movies", "Time Editor", "autosave"];

function Check({ t, on, off }: { t: string; on?: boolean; off?: boolean }) {
  return (
    <label className={`ml-[149px] flex h-[22px] shrink-0 items-center ${off ? "text-[#888]" : ""}`}>
      <span className="relative mr-[5px] flex size-[13px]">
        <input type="checkbox" defaultChecked={on} disabled={off} className="size-[13px] appearance-none bg-[#2b2b2b]" />
        {on && <svg viewBox="0 0 13 13" className="pointer-events-none absolute inset-0"><path d="m2 6 3 4 6-8" fill="none" stroke={off ? "#888" : "#eee"} strokeWidth="2" /></svg>}
      </span>
      {t}
    </label>
  );
}

function MiniFolder() {
  return <svg viewBox="0 0 12 12" className="mr-[3px] size-[11px] shrink-0"><path d="M0 1h5l1 1h6v8H0z" fill="#b9d7ee" /><path d="M0 4h12v6H0z" fill="#9cc3e4" /></svg>;
}

const bookmarks: [string, ReactNode][] = [
  ["我的电脑", <><path key="a" d="M1 1h10v7H1z" fill="#a8c8ea" /><path key="b" d="M4 8h4v3H4z" fill="#7aa" /></>],
  ["Desktop", <><path key="a" d="M0 1h12v10H0z" fill="#1f8fe8" /><path key="b" d="m0 11 6-3 6 3z" fill="#0d5cab" /></>],
  ["Documents", <><path key="a" d="M1 0h10v12H1z" fill="#e8f0f8" /><path key="b" d="M3 4h6M3 7h6" stroke="#3b79b8" /></>],
  ["Administrator", <><circle key="a" cx="5" cy="3" r="3" fill="#c99a80" /><path key="b" d="M1 12c0-8 10-8 10 0z" fill="#4fa36a" /></>],
];

function RefDialog() {
  return (
    <div role="dialog" aria-label="引用" className="absolute top-[215px] left-[447px] flex w-[1000px] flex-col bg-[#444] shadow-[0_4px_16px_rgba(0,0,0,0.45)]">
      <div className="flex h-[30px] items-center bg-white text-black">
        <span className="ml-[9px]"><Logo size="h-4 w-[14px]" /></span>
        <h2 className="ml-[6px]">引用</h2>
        <button aria-label="关闭" className="mr-[9px] ml-auto"><svg viewBox="0 0 12 12" className="size-3"><path d="m1 1 10 10M11 1 1 11" stroke="#222" strokeWidth="1.200" /></svg></button>
      </div>

      <div className="flex h-[40px] items-center pt-[5px] pr-[9px] pl-[11px]">
        <label htmlFor="look" className="w-[59px]">查找范围:</label>
        <div className="flex h-[22px] flex-1 items-center bg-[#2b2b2b]">
          <svg viewBox="0 0 14 16" className="ml-[5px] h-4 w-[14px]"><path d="M1 1h12v14H1z" fill="#f6d774" /><path d="M1 1h3v14H1z" fill="#e5b94a" /></svg>
          <input id="look" defaultValue={"E:\\Work\\work 2025\\C 2025 7 ZN\\scenes\\model"} className="h-full flex-1 bg-transparent pl-[5px] text-[13px] outline-none" />
          <button aria-label="展开" className="flex h-full w-4 items-center justify-center bg-[#5d5d5d]"><Tri color="#eee" /></button>
        </div>
        <div className="ml-[6px] flex w-[164px] items-center justify-around">
          <button aria-label="后退"><svg viewBox="0 0 14 14" className="size-[14px]"><path d="M3 1h5v12H6l-1-3-2 3z" fill="#b5b5b5" /><path d="M7 7l6-4v8z" fill="#4a9f95" /></svg></button>
          <button aria-label="前进"><svg viewBox="0 0 14 14" className="size-[14px]"><path d="M4 1h4v12H4zM8 3l4 5-4 3z" fill="#5c5c5c" /></svg></button>
          <button aria-label="上一级"><svg viewBox="0 0 14 14" className="size-[14px]"><path d="m7 0 6 7h-3v7H4V7H1z" fill="#8fc1ee" /></svg></button>
          <button aria-label="新建文件夹"><svg viewBox="0 0 16 16" className="size-4"><path d="M1 6h6l2-2h4v11H1z" fill="#efc75e" /><path d="M12 0v7M9 2l6 4M15 2 9 6" stroke="#f3ee4a" /></svg></button>
          <button aria-label="列表视图"><svg viewBox="0 0 14 14" className="size-[14px]"><path d="M1 0h12v14H1z" fill="#ddd" /><path d="M4 3h7M4 6h7M4 9h7M4 12h7" stroke="#444" /></svg></button>
          <button aria-label="详细视图"><svg viewBox="0 0 14 14" className="size-[14px]"><path d="M1 0h12v14H1z" fill="#ddd" /><path d="M6 3h6M6 6h6M6 9h6M6 12h6M2 3h2M2 6h2M2 9h2M2 12h2" stroke="#444" /></svg></button>
        </div>
      </div>

      <div className="flex h-[456px] gap-[8px] pl-[11px]">
        <div className="flex w-[124px] shrink-0 flex-col">
          <span className="h-[23px] leading-[20px]">文件夹书签:</span>
          <ul className="h-[95px] border border-[#363636] bg-[#2b2b2b] pl-[3px]">
            {bookmarks.map(([b, i]) => <li key={b} className="flex h-[18px] items-center"><svg viewBox="0 0 12 12" className="mr-[3px] size-[11px]">{i}</svg>{b}</li>)}
          </ul>
          <span className="mx-auto mt-[3px] h-px w-10 border-t border-dotted border-[#777]" />
          <span className="h-[26px] leading-[28px]">当前项目:</span>
          <div className="relative flex h-[23px] items-center bg-[#5d5d5d]">
            <select aria-label="当前项目" className="w-[105px] appearance-none overflow-hidden pl-[6px] text-[13px] text-clip text-[#bbb] outline-none"><option>E:/Work/work_20</option></select>
            <span className="pointer-events-none absolute right-1"><Tri /></span>
          </div>
          <div className="mt-[7px] flex h-[241px] border border-[#363636] bg-[#2b2b2b]">
            <ul className="flex-1 overflow-hidden pt-px pl-[3px]">
              {folders.map((f) => <li key={f} className="flex h-[18px] items-center whitespace-nowrap"><MiniFolder />{f}</li>)}
            </ul>
            <div className="flex w-3 flex-col items-center bg-[#2f2f2f] py-[3px]"><Tri dir="up" /><span className="h-[197px] w-[10px] rounded bg-[#5d5d5d]" /><span className="mt-auto flex"><Tri /></span></div>
          </div>
          <button className="mt-[11px] h-[26px] rounded-sm bg-[#5d5d5d] text-[#eee]">设置项目...</button>
        </div>

        <div className="flex w-[403px] shrink-0 flex-col border border-[#5e87ab] bg-[#2b2b2b]">
          <div className="min-h-0 flex-1 overflow-hidden">
            <table className="w-[460px] table-fixed">
              <colgroup><col className="w-[235px]" /><col className="w-[59px]" /><col className="w-[63px]" /><col /></colgroup>
              <thead>
                <tr className="h-[25px] bg-[#5d5d5d] text-left text-[#eee]">
                  <th className="font-normal"><span className="flex items-center justify-between pr-2 pl-6">名称<svg viewBox="0 0 10 8" className="h-2 w-[10px]"><path d="m5 1 4 6H1z" fill="none" stroke="#aaa" /></svg></span></th>
                  <th className="border-l border-[#3b3b3b] pl-[3px] font-normal">体积</th>
                  <th className="border-l border-[#3b3b3b] pl-[3px] font-normal">类型</th>
                  <th className="border-l border-[#3b3b3b] pl-[3px] font-normal">修改日期</th>
                </tr>
              </thead>
              <tbody>
                {files.map(([f, s]) => (
                  <tr key={f} className="h-[18px] leading-[18px] whitespace-nowrap">
                    <td><span className="flex items-center"><svg viewBox="0 0 16 18" className="ml-[2px] h-[17px] w-[15px]"><path d="M0 0h16v18H0z" fill="#2f6378" /><path d="M1 0h9l4 5v3H1z" fill="#f4f7f9" /><path d="M3 16v-4l2 2 2-2v4M10 12v4h3v-2h-3" fill="none" stroke="#fff" strokeWidth="1.300" /></svg><span className="ml-[2px]">{f}</span></span></td>
                    <td className="pr-px text-right">{s} MiB</td>
                    <td className="pl-[2px]">mb File</td>
                    <td>2025/7/</td>
                  </tr>
                ))}
              </tbody>
            </table>
          </div>
          <div className="flex h-[12px] items-center px-[2px]"><Tri dir="left" /><span className="ml-[2px] h-[10px] w-[320px] rounded bg-[#5d5d5d]" /><span className="ml-auto flex"><Tri dir="right" /></span></div>
        </div>

        <div className="mr-[11px] ml-[9px] flex min-w-0 flex-1 flex-col bg-[#484848] pr-3">
          <span className="h-[28px] leading-[18px]">选项...</span>
          <div className="ml-[3px] flex h-[399px]">
            <div className="flex min-w-0 flex-1 flex-col overflow-hidden bg-[#444] pt-2 pl-[11px]">
              <SectionHead t="常规选项" pad="mr-4" />
              <div className="flex flex-col pt-2 pb-3">
                <Check t="延缓" /><Check t="锁定" /><Check t="分组" />
                <label className="ml-[128px] flex h-[22px] items-center">组名称:<input disabled className="ml-[2px] h-[18px] w-[150px] bg-[#424242]" /></label>
                <Check t="定位器" on off />
              </div>
              <SectionHead t="加载选项" pad="mr-4" />
              <div className="flex flex-col pt-2 pb-3">
                <div className="flex items-center pl-[99px]">加载设置<Pick value="加载保存的引用加载状态" label="加载设置" className="ml-1 h-[23px] w-[176px]" /></div>
                <Check t="保留已卸载名称空间" />
              </div>
              <SectionHead t="共享引用选项" pad="mr-4" />
              <div className="flex flex-col pt-2 pb-3"><Check t="共享节点" on /><Check t="显示层" /><Check t="着色网络" /></div>
              <SectionHead t="名称空间选项" pad="mr-4" />
              <div className="pt-[6px]"><Check t="使用名称空间" on /></div>
            </div>
            <div className="flex w-3 shrink-0 flex-col items-center bg-[#373737] pt-[2px] pb-[2px]"><Tri dir="up" /><span className="mt-[2px] h-[194px] w-[10px] bg-[#5d5d5d]" /><span className="mt-auto flex"><Tri /></span></div>
          </div>
          <div className="mr-3 ml-[3px] flex h-[11px] items-center bg-[#3a3a3a]"><Tri dir="left" /><span className="ml-[3px] h-[10px] w-[341px] rounded bg-[#5d5d5d]" /><span className="ml-auto flex"><Tri dir="right" /></span></div>
          <span className="mx-auto mt-[13px] h-px w-[143px] border-t border-dotted border-[#777]" />
        </div>
      </div>

      <div className="flex h-[39px] items-end pr-[11px] pl-[11px]">
        <label htmlFor="fname" className="w-[59px] pb-1">文件名:</label>
        <input id="fname" className="mb-[2px] h-[20px] flex-1 rounded-sm border-b border-[#5a5a5a] bg-[#2b2b2b]" />
        <button disabled className="ml-[11px] h-[26px] w-[76px] rounded-sm bg-[#484848] text-[#7a7a7a]">引用</button>
      </div>
      <div className="mt-[9px] mb-[11px] flex h-[26px] items-center pr-[11px] pl-[11px]">
        <span className="w-[59px]">文件类型:</span>
        <div className="relative flex h-[24px] flex-1 items-center bg-[#5d5d5d]">
          <select aria-label="文件类型" className="h-full w-full appearance-none pl-[2px] outline-none"><option>所有文件</option></select>
          <span className="pointer-events-none absolute right-1"><Tri /></span>
        </div>
        <button className="ml-[11px] h-[26px] w-[76px] rounded-sm bg-[#5d5d5d] text-white">取消</button>
      </div>
      <svg viewBox="0 0 12 12" className="absolute right-0 bottom-0 size-[11px]" aria-hidden="true"><path d="M0 12 12 0M4 12l8-8M8 12l4-4" stroke="#222" /></svg>
    </div>
  );
}

function Playback() {
  const ticks = Array.from({ length: 31 }, (_, i) => i * 5);
  return (
    <footer className="shrink-0">
      <div className="flex h-[53px] border-t-2 border-[#393939]">
        <div className="mt-2 mr-[7px] ml-[2px] flex h-9"><Grip /></div>
        <div className="min-w-0 flex-1">
          <div className="flex h-full overflow-hidden bg-[linear-gradient(to_bottom,#444_9px,#2b2b2b_9px,#2b2b2b_41px,#5f5f5f_41px,#5f5f5f_43px,#444_43px)] pl-[9px] text-[13px] text-[#9a9a9a]">
            {ticks.map((t) => (
              <div key={t} className={`relative w-[calc((100%-19px)/30)] shrink-0 border-l border-[#222] ${t ? "" : "bg-[linear-gradient(to_right,rgba(130,130,130,0.45)_10px,transparent_10px)]"}`}>
                <span className="block pt-[8px] pl-[6px] leading-[18px]">{t}</span>
                {t === 0 && <span className="block pl-[6px] leading-[12px] text-white">0</span>}
                <span className="absolute top-[25px] -left-px h-[16px] w-px bg-[#999]" />
              </div>
            ))}
          </div>
        </div>
        <input aria-label="当前时间" defaultValue="0" className="mt-[15px] ml-[11px] h-5 w-14 shrink-0 bg-[#2b2b2b] pl-1 text-[13px]" />
        <div className="mt-[13px] mr-1 ml-[4px] flex h-6 w-[222px] shrink-0 items-center justify-around">
          {["first", "prev", "prevKey", "back", "play", "nextKey", "next", "last"].map((n) => <button key={n} aria-label={n}><Ico n={n} size="size-[17px]" /></button>)}
        </div>
      </div>

      <div className="flex h-[36px] items-center border-t-2 border-[#393939]">
        <div className="mr-[7px] ml-[2px] flex"><Grip /></div>
        <input aria-label="动画开始" defaultValue="0" className="h-5 w-14 bg-[#2b2b2b] pl-[5px] text-[13px]" />
        <div className="ml-[11px] flex h-5 flex-1 items-center bg-[#2b2b2b] text-[13px]">
          <div className="flex h-full w-[61%] items-center justify-between border-y border-[#333] bg-[#474747] px-px">
            <span className="flex items-center gap-2"><span className="h-4 w-2 bg-[#a0a0a0]" />0</span>
            <span className="h-3 w-1 border-x border-dotted border-[#777]" />
            <span className="flex items-center gap-2">150<span className="h-4 w-2 bg-[#a0a0a0]" /></span>
          </div>
        </div>
        <input aria-label="动画结束" defaultValue="250" className="ml-2 h-5 w-14 bg-[#2b2b2b] pl-[5px] text-[13px]" />
        <Sep w="w-[44px]" />
        <Ico n="keyMark" size="size-[20px]" />
        <Sep w="w-[42px]" />
        <span className="flex w-6"><Tri color="#888" /></span>
        <span className="flex h-[22px] w-[99px] shrink-0 items-center border border-[#4c4c4c] pl-1">无角色集</span>
        <span className="ml-4 flex w-[18px]"><Tri color="#888" /></span>
        <span className="flex h-[22px] w-[97px] shrink-0 items-center border border-[#4c4c4c] pl-1">无动画层</span>
        <Sep w="w-[46px]" />
        <Pick value="24 fps" label="帧速率" className="h-[22px] w-[103px]" />
        <span className="ml-4 flex gap-3"><Ico n="repeat" size="size-[18px]" /><Ico n="cache" size="size-[18px]" /></span>
        <Sep w="w-[46px]" />
        <span className="mr-[9px] flex gap-3"><Ico n="sound" size="size-[17px]" /><Ico n="autoKey" size="size-[17px]" /><Ico n="runner" size="size-[17px]" /></span>
      </div>

      <div className="flex h-[38px] items-center border-t-2 border-[#393939]">
        <div className="mr-[7px] ml-[2px] flex"><Grip /></div>
        <button aria-label="帮助"><svg viewBox="0 0 16 16" className="size-4"><circle cx="8" cy="8" r="8" fill="#8a8a8a" /><path d="M5.500 6.500c0-4 5-4 5-.5 0 2-2.500 2-2.500 4M8 11v2" fill="none" stroke="#3a3a3a" strokeWidth="1.700" /></svg></button>
        <div className="flex-1" />
        <div className="flex w-[1106px] items-center">
          <span className="mr-[5px] flex h-7 items-center border-l border-[#333] pl-1"><Grip /></span>
          <label htmlFor="mel" className="w-8 text-[13px] text-[#eee]">MEL</label>
          <input id="mel" className="h-5 w-[282px] bg-[#2b2b2b]" />
          <input aria-label="输出" readOnly className="ml-1 h-5 min-w-0 flex-1 bg-[#2b2b2b]" />
          <button aria-label="脚本编辑器" className="mx-[9px]"><Ico n="script" size="size-[19px]" /></button>
        </div>
      </div>

      <div className="flex h-2 items-start overflow-hidden bg-[linear-gradient(to_right,#343434,#403436_15%,#453538_45%,#3c3b39_50%,#3c3c3a_68%,#443739)] text-[12px] text-white">
        <span className="ml-[266px] h-2 w-12 bg-[#6a5c60]" />
        <span className="ml-auto pt-[2px] leading-4">40°F</span>
        <span className="mr-[30px] ml-[470px] pt-[2px] leading-4">8:56</span>
      </div>
      <div className="h-8 bg-black" />
    </footer>
  );
}

export default function App() {
  return (
    <div className="relative flex h-screen min-h-[1000px] flex-col overflow-hidden bg-[#444] font-['Noto_Sans','Noto_Sans_CJK_SC',sans-serif] text-[12px] leading-4 text-[#c8c8c8]">
      <Header />
      <main className="flex min-h-0 flex-1 border-t border-[#3a3a3a]">
        <ToolBox />
        <Outliner />
        <Viewport />
        <HumanIK />
        <SideTabs />
      </main>
      <Playback />
      <RefDialog />
      <svg viewBox="0 0 14 20" className="pointer-events-none absolute top-[352px] left-[654px] h-[18px] w-[12px]" aria-hidden="true"><path d="M1 0v16l4-4 3 7 3-1-3-7h5z" fill="#fff" stroke="#222" strokeWidth=".7" /></svg>
    </div>
  );
}
